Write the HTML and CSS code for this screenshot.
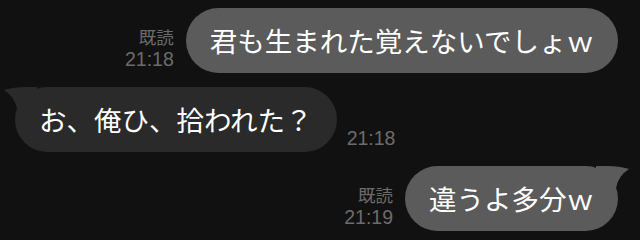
FILE: index.html
```html
<!DOCTYPE html>
<html lang="ja">
<head>
    <meta charset="UTF-8">
    <meta name="viewport" content="width=device-width, initial-scale=1.0">
    <title>トーク</title>
    <link rel="stylesheet" href="styles.css">
</head>
<body>
    <div class="chat">
        <div class="row out">
            <div class="meta">
                <span>既読</span>
                <span class="time">21:18</span>
            </div>
            <div class="bubble mine">君も生まれた覚えないでしょｗ</div>
        </div>

        <div class="row in">
            <div class="bubble theirs">
                <svg class="tail tail-left" width="34" height="26" viewBox="0 0 34 26">
                    <path d="M0 2 L10 2 Q24 2 33 5 Q22 12 20 24 L0 24 Z"/>
                </svg>
                お、俺ひ、拾われた？
            </div>
            <div class="meta">
                <span class="time">21:18</span>
            </div>
        </div>

        <div class="row out">
            <div class="meta">
                <span>既読</span>
                <span class="time">21:19</span>
            </div>
            <div class="bubble mine">
                違うよ多分ｗ
                <svg class="tail tail-right" width="34" height="26" viewBox="0 0 34 26">
                    <path d="M0 2 L10 2 Q24 2 33 5 Q22 12 20 24 L0 24 Z"/>
                </svg>
            </div>
        </div>
    </div>
</body>
</html>
```

FILE: styles.css
```css
:root {
    --bg-color: #111111;
    --mine-bg: #5b5b5b;
    --theirs-bg: #2a2a2a;
    --meta-color: #6c6c6c;
}

* {
    box-sizing: border-box;
}

body {
    margin: 0;
    background: var(--bg-color);
    font-family: "Noto Sans CJK JP", "Noto Sans", sans-serif;
    color: #ffffff;
    overflow: hidden;
}

.chat {
    display: flex;
    flex-direction: column;
    gap: 14px;
    padding-top: 8px;
}

.row {
    display: flex;
    align-items: flex-end;
}

.row.out {
    justify-content: flex-end;
    gap: 12px;
    padding-right: 22px;
}

.row.in {
    justify-content: flex-start;
    gap: 10px;
    padding-left: 15px;
}

.bubble {
    position: relative;
    height: 65px;
    display: flex;
    align-items: center;
    padding: 0 24px 2px;
    border-radius: 33px;
    font-size: 27.5px;
    white-space: nowrap;
}

.bubble.mine {
    background: var(--mine-bg);
}

.bubble.theirs {
    background: var(--theirs-bg);
}

/* しっぽ */
.tail {
    position: absolute;
    top: -2px;
}

.tail-right {
    right: -12px;
    fill: var(--mine-bg);
}

.tail-left {
    left: -12px;
    fill: var(--theirs-bg);
    transform: scaleX(-1);
}

.meta {
    display: flex;
    flex-direction: column;
    align-items: flex-end;
    margin-bottom: 3px;
    color: var(--meta-color);
    font-size: 17.5px;
    line-height: 22px;
}

.meta .time {
    font-family: "Liberation Sans", "Noto Sans CJK JP", sans-serif;
    font-size: 19.5px;
}
```
